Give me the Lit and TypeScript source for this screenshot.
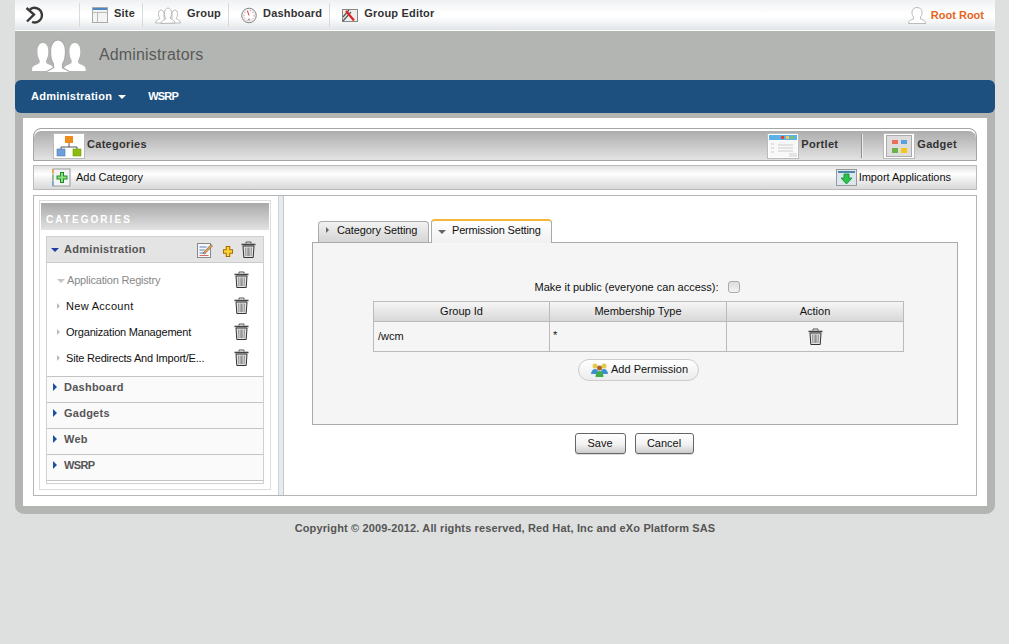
import { LitElement, html, css, svg } from 'lit';
import { customElement } from 'lit/decorators.js';

const trash = () => html`<svg class="trash" width="15" height="17" viewBox="0 0 15 17">
  <path d="M5 2.500V1h5v1.500" fill="none" stroke="#555"/>
  <path d="M.5 3.500h14" stroke="#444" stroke-width="1.600"/>
  <path d="M2 5h11l-.8 11.500H2.800z" fill="#e2e2e2" stroke="#333"/>
  <path d="M4.500 6.500l.3 8.500M6.200 6.500l.1 8.500M7.500 6.500v8.500M8.800 6.500l-.1 8.500M10.500 6.500l-.3 8.500" stroke="#777" stroke-width=".7"/>
</svg>`;

// one white figure of the "group" mark, 22 wide and 26 high before scaling
const person = (x: number, y: number, s: number, stroke: string) => svg`<g transform="translate(${x} ${y}) scale(${s})">
  <path d="M1 26v-2c0-3 5-4 7-5.500V16C6.500 14 6 11 6 7.500 6 3 8 0 11 0s5 3 5 7.500c0 3.500-.5 6.500-2 8.500v2.500c2 1.500 7 2.500 7 5.500v2z" fill="#fff" stroke=${stroke} stroke-width=".8"/>
</g>`;

const tri = (dir: 'tri-right' | 'tri-down' | 'tri-small', color: string) =>
  html`<span class="tri ${dir}" style="--c:${color}"></span>`;

@customElement('app-root')
export class AppRoot extends LitElement {
  static styles = css`
    :host { display: block; height: 644px; background: #dee0df; font: 11px "Liberation Sans", Arial, sans-serif; color: #111; overflow: hidden; }
    * { box-sizing: border-box; }
    svg { display: block; flex: none; }
    .tri { display: inline-block; width: 0; height: 0; flex: none; }
    .tri-right { border-left: 4px solid var(--c); border-top: 4px solid transparent; border-bottom: 4px solid transparent; }
    .tri-small { border-left: 3px solid var(--c); border-top: 3px solid transparent; border-bottom: 3px solid transparent; }
    .tri-down { border-top: 4px solid var(--c); border-left: 4px solid transparent; border-right: 4px solid transparent; }

    .shell { width: 980px; margin-left: 15px; }
    .top { height: 31px; display: flex; align-items: center; background: linear-gradient(#eef1f3, #fff 45%, #fff 55%, #e2e6e9); border-bottom: 1px solid #fff; }
    .logo { width: 64px; padding-left: 10px; }
    .top-item { display: flex; align-items: center; gap: 6px; height: 24px; padding: 0 7px 0 12px; border-left: 1px solid #d8dada; font-weight: bold; color: #333; letter-spacing: .2px; }
    .top-item span { margin-bottom: 4px; }
    .user { margin-left: auto; display: flex; align-items: center; gap: 5px; padding-right: 11px; color: #e6641c; font-weight: bold; }

    .body { background: #b3b5b3; border-radius: 0 0 9px 9px; padding-bottom: 8px; }
    .head { height: 49px; display: flex; align-items: center; padding-left: 15px; }
    .head h1 { margin: 0 0 2px 11px; font-size: 16px; font-weight: normal; color: #585a58; letter-spacing: .15px; }
    .nav { height: 33px; background: #1d4f7f; border-radius: 6px; display: flex; align-items: center; padding: 0 0 2px 16px; color: #fff; font-weight: bold; letter-spacing: .25px; }
    .nav .item { display: flex; align-items: center; gap: 6px; margin-right: 22px; }
    .nav .item .tri { margin-top: 2px; }
    .nav .caps { letter-spacing: -.8px; }

    .panel { margin: 5px 8px 0; background: #fff; padding: 10px; height: 388px; }
    .tabbar { height: 33px; border: 1px solid #a5a5a5; border-radius: 8px 8px 0 0; background: linear-gradient(#a9a9a9, #e3e3e3); box-shadow: inset 0 2px 0 #fff; display: flex; align-items: center; font-weight: bold; color: #333; letter-spacing: .3px; padding: 2px 19px 0 19px; }
    .tabbar .lbl { margin-bottom: 4px; }
    .tile { width: 32px; height: 26px; background: #fff; border: 1px solid #bbb; display: flex; align-items: center; justify-content: center; margin-right: 2px; }
    .spacer { flex: 1; }
    .tabbar .sep { width: 2px; height: 24px; background: #8f8f8f; border-right: 1px solid #eee; margin: 0 20px 0 23px; }

    .tools { margin-top: 4px; height: 25px; border: 1px solid #bbb; background: linear-gradient(#e2e2e2, #fff 35%, #eee 60%, #d9d9d9); display: flex; align-items: center; padding: 0 25px 0 18px; }
    .tools .act { display: flex; align-items: center; gap: 2px; }
    .tools .act span { margin-bottom: 2px; letter-spacing: -.03px; }
    .tools .add { gap: 5px; }

    .main { margin-top: 5px; height: 301px; border: 1px solid #b5b5b5; display: flex; }
    .left { width: 244px; padding: 4px 0 0 5px; }
    .divider { width: 6px; background: #e6ebef; border-left: 1px solid #cdd2d6; border-right: 1px solid #c5c8ca; }

    .cats { width: 232px; height: 290px; border: 1px solid #ddd; padding: 2px 1px 0; }
    .cats-h { height: 27px; padding: 6px 0 0 5px; background: linear-gradient(#a9a9a9, #e2e2e2); color: #fff; font-weight: bold; font-size: 10px; letter-spacing: 2.050px; display: flex; align-items: center; }
    .tree { margin: 6px 5px 0; height: 248px; border: 1px solid #d0d0d0; padding-bottom: 2px; }
    .root { height: 26px; background: #e4e4e4; border-bottom: 1px solid #ccc; display: flex; align-items: center; padding: 0 7px 0 4px; color: #555; font-weight: bold; letter-spacing: .3px; }
    .root .tri { margin-right: 5px; }
    .root .name { margin-bottom: 2px; }
    .root .icons { margin-left: auto; display: flex; align-items: center; }
    .root .pencil { margin-right: 9px; }
    .root .plus { margin: 3px 7px 0 0; }
    .subs { padding-top: 4px; height: 113px; }
    .sub { height: 26px; display: flex; align-items: center; padding: 0 14px 0 10px; }
    .sub .tri { margin-right: 6px; }
    .sub .t { flex: 1; white-space: nowrap; letter-spacing: -.2px; }
    .sub .t.wide { letter-spacing: .3px; }
    .sub svg { margin-bottom: 2px; }
    .sub.muted { color: #888; }
    .sub.muted .tri { margin: 1px 2px 0 0; }
    .cat { height: 26px; border-top: 1px solid #c4c4c4; background: #fafafa; display: flex; align-items: center; padding: 0 0 6px 6px; color: #555; font-weight: bold; letter-spacing: .25px; }
    .cat .tri { margin-right: 7px; }
    .cat.last { height: 27px; border-bottom: 1px solid #c4c4c4; }
    .cat .caps { letter-spacing: -.6px; }

    .content { flex: 1; padding: 23px 18px 0 28px; }
    .tabs { display: flex; align-items: flex-end; height: 23px; padding-left: 6px; gap: 2px; position: relative; z-index: 1; }
    .tab { height: 21px; width: 111px; border: 1px solid #aaa; border-bottom: 0; border-radius: 4px 4px 0 0; background: linear-gradient(#f2f2f2, #d4d4d4); display: flex; align-items: center; padding: 0 0 5px 7px; gap: 8px; letter-spacing: -.1px; }
    .tab.on { height: 24px; margin-bottom: -1px; width: 121px; border-top: 2px solid #f4b73c; background: linear-gradient(#fff, #f0f0f0); padding: 0 0 5px 6px; gap: 6px; letter-spacing: -.17px; }
    .tab.on .tri { margin-top: 5px; }
    .box { height: 183px; border: 1px solid #aaa; background: #f5f5f5; padding-top: 36px; display: flex; flex-direction: column; align-items: center; }
    .pub { display: flex; align-items: center; gap: 9px; margin-left: 4px; height: 16px; }
    .check { width: 12px; height: 12px; border: 1px solid #aaa; border-radius: 3px; background: linear-gradient(#ddd, #f2f2f2); }
    .grid { margin: 6px 0 0 7px; width: 531px; border: 1px solid #bbb; display: grid; grid-template-columns: 175px 177px 177px; }
    .grid > div { display: flex; align-items: center; justify-content: center; }
    .grid .th { height: 20px; background: linear-gradient(#f6f6f6, #d8d8d8); border-bottom: 1px solid #bbb; border-left: 1px solid #bbb; padding-bottom: 2px; }
    .grid .td { height: 29px; border-left: 1px solid #bbb; }
    .grid .first { border-left: 0; }
    .grid .txt { justify-content: flex-start; padding: 0 0 2px 4px; }
    .grid .star { align-items: flex-start; padding: 7px 0 0 3px; }
    .pill { margin: 7px 0 0 7px; width: 121px; height: 22px; border: 1px solid #ccc; border-radius: 11px; background: linear-gradient(#fff, #ececec); display: flex; align-items: center; gap: 3px; padding: 0 0 2px 12px; }
    .btns { display: flex; justify-content: center; gap: 9px; margin-top: 8px; padding-right: 2px; }
    .btn { height: 21px; border: 1px solid #666; border-radius: 3px; background: linear-gradient(#fff, #f2f2f2 55%, #ccc); display: flex; align-items: center; justify-content: center; padding-bottom: 1px; box-shadow: 0 1px 0 #ddd; }
    .btn.s { width: 51px; }
    .btn.c { width: 59px; }

    .foot { text-align: center; margin-top: 8px; font-weight: bold; color: #555; letter-spacing: .14px; }
  `;

  render() {
    return html`
      <div class="shell">
        <div class="top">
          <div class="logo">
            <svg width="21" height="20" viewBox="0 0 21 20" fill="none" stroke="#3a3a3a" stroke-width="2.400">
              <path d="M5 4.500A7.300 7.300 0 1 1 7 17M1.500 3l7.500 6.500-7 7"/>
            </svg>
          </div>
          <div class="top-item">
            <svg width="16" height="16" viewBox="0 0 16 16"><rect x=".5" y=".5" width="15" height="15" fill="#f4f4f4" stroke="#aaa"/><rect x="1" y="1" width="14" height="2" fill="#4d87c7"/><path d="M1 5.500h14M5.500 5.500V15" stroke="#bbb"/></svg>
            <span>Site</span>
          </div>
          <div class="top-item">
            <svg width="26" height="17" viewBox="0 0 26 17" fill="#fff" stroke="#aaa" stroke-width=".8">
              <path d="M.5 16c0-3 3-3 4.500-4.500-1-1-1.500-3-1.500-5 0-2 1-3.500 2.500-3.500s3 1.500 3 3.500v5l4 4.500z"/>
              <path d="M25.500 16c0-3-3-3-4.500-4.500 1-1 1.500-3 1.500-5 0-2-1-3.500-2.500-3.500s-3 1.500-3 3.500v5l-4 4.500z"/>
              <path d="M6 16.500c0-3 4-3.500 5-5-1-1-1.500-3-1.500-5.500C9.500 3 11 1 13 1s3.500 2 3.500 4.500c0 2.500-.5 4.500-1.500 5.500 1 1.500 5 2 5 5z"/>
            </svg>
            <span>Group</span>
          </div>
          <div class="top-item">
            <svg width="16" height="17" viewBox="0 0 16 17"><circle cx="8" cy="8.500" r="7.300" fill="#eee" stroke="#888"/><circle cx="8" cy="8.500" r="5" fill="#fff" stroke="#d88" stroke-dasharray="1 2"/><path d="M8 8.500L6.500 4" stroke="#d33" stroke-width="1"/><circle cx="8" cy="12.500" r="1" fill="#999"/></svg>
            <span>Dashboard</span>
          </div>
          <div class="top-item">
            <svg width="16" height="14" viewBox="0 0 16 14"><rect x=".5" y="1.500" width="15" height="12" fill="#eee" stroke="#888"/><path d="M1 9l6-7M1 13l8-9" stroke="#555" stroke-width="1.200"/><path d="M4 3l8 9.500" stroke="#d22" stroke-width="2.200"/></svg>
            <span>Group Editor</span>
          </div>
          <div class="user">
            <svg width="18" height="17" viewBox="0 0 18 17"><path d="M.5 16.500c0-3 2-3.500 5-4.500V10C4 8.500 4 6.500 4 5c0-2.500 2-4.500 5-4.500s5 2 5 4.500c0 1.500 0 3.500-1.500 5v2c3 1 5 1.500 5 4.500z" fill="#fff" stroke="#bbb"/></svg>
            Root Root
          </div>
        </div>
        <div class="body">
          <div class="head">
            <svg width="58" height="33" viewBox="0 0 58 33">
              ${person(1, 4, 1.080, 'none')}
              ${person(33, 4, 1.080, 'none')}
              ${person(11.500, 1, 1.500, '#a8aaa8')}
            </svg>
            <h1>Administrators</h1>
          </div>
          <div class="nav">
            <div class="item">Administration ${tri('tri-down', '#fff')}</div>
            <div class="item caps">WSRP</div>
          </div>
          <div class="panel">
            <div class="tabbar">
              <div class="tile">
                <svg width="26" height="24" viewBox="0 0 26 24"><rect x="9" y="2" width="8" height="7" fill="#f08c1e"/><path d="M13 9v4M5 16v-3h16v3" fill="none" stroke="#555"/><rect x="1" y="15" width="8" height="7" fill="#6f9fd8" stroke="#4a78b0" stroke-width=".6"/><rect x="17" y="15" width="8" height="7" fill="#8dbb10" stroke="#6d9a08" stroke-width=".6"/></svg>
              </div>
              <span class="lbl">Categories</span>
              <div class="spacer"></div>
              <div class="tile">
                <svg width="28" height="22" viewBox="0 0 28 22"><rect width="28" height="5" fill="#5bb1ea"/><rect x="12" y="1" width="3" height="3" fill="#e8412c"/><rect x="17" y="1" width="3" height="3" fill="#f2c94c"/><rect x="22" y="1" width="3" height="3" fill="#7ac36a"/><rect y="5" width="28" height="17" fill="#f8f8f8"/><path d="M9 10h15M9 13h15M9 16h15M2 9h3M2 13h3M2 17h3" stroke="#ccc"/><rect x="20" y="18" width="8" height="4" fill="#e4e4e4"/></svg>
              </div>
              <span class="lbl">Portlet</span>
              <div class="sep"></div>
              <div class="tile">
                <svg width="26" height="22" viewBox="0 0 26 22"><rect x=".5" y=".5" width="25" height="21" fill="#ddd" stroke="#aaa"/><rect x="6" y="5" width="6" height="4" fill="#e8705a"/><rect x="15" y="5" width="6" height="4" fill="#5b9fe0"/><rect x="6" y="13" width="6" height="5" fill="#6cb24a"/><rect x="15" y="13" width="6" height="5" fill="#f5c518"/></svg>
              </div>
              <span class="lbl">Gadget</span>
            </div>
            <div class="tools">
              <div class="act add">
                <svg width="19" height="19" viewBox="0 0 19 19"><rect x="1" y="1" width="17" height="17" fill="#f4f4f4" stroke="#999"/><path d="M.5 1v4" stroke="#f0a030" stroke-width="2"/><path d="M.5 7v5" stroke="#7cc07c" stroke-width="2"/><path d="M.5 13v5" stroke="#6f9fd8" stroke-width="2"/><path d="M10 4v11M4.500 9.500h11" stroke="#1d8a2a" stroke-width="4"/><path d="M10 5v9M5.500 9.500h9" stroke="#8fe07f" stroke-width="2"/></svg>
                <span>Add Category</span>
              </div>
              <div class="spacer"></div>
              <div class="act">
                <svg width="21" height="17" viewBox="0 0 21 17"><rect x=".5" y=".5" width="20" height="16" fill="#dbe7ee" stroke="#999"/><rect x="2" y="2" width="17" height="2" fill="#4d87a7"/><path d="M8 5h5v4h3l-5.500 6L5 9h3z" fill="#2ac24a" stroke="#128a2a" stroke-width=".8"/></svg>
                <span>Import Applications</span>
              </div>
            </div>
            <div class="main">
              <div class="left">
                <div class="cats">
                  <div class="cats-h">CATEGORIES</div>
                  <div class="tree">
                    <div class="root">
                      ${tri('tri-down', '#1d3f9f')}
                      <span class="name">Administration</span>
                      <div class="icons">
                        <svg class="pencil" width="16" height="16" viewBox="0 0 16 16"><rect x=".5" y="1.500" width="13" height="14" fill="#f4f8fb" stroke="#888"/><path d="M2.500 5h7M2.500 8h5M2.500 11h6" stroke="#5b7fb8"/><path d="M2.500 13.500h9" stroke="#d66"/><path d="M6 11L14 2.500l1.500 1.500L7.500 12z" fill="#f2a03c" stroke="#555" stroke-width=".6"/></svg>
                        <svg class="plus" width="12" height="13" viewBox="0 0 12 13"><path d="M6 1v11M1 6.500h10" stroke="#a86a00" stroke-width="4.500"/><path d="M6 2v9M2 6.500h8" stroke="#fbd435" stroke-width="2.500"/></svg>
                        ${trash()}
                      </div>
                    </div>
                    <div class="subs">
                      <div class="sub muted">${tri('tri-down', '#c4c4c4')}<span class="t">Application Registry</span>${trash()}</div>
                      <div class="sub">${tri('tri-small', '#bbb')}<span class="t wide">New Account</span>${trash()}</div>
                      <div class="sub">${tri('tri-small', '#bbb')}<span class="t">Organization Management</span>${trash()}</div>
                      <div class="sub">${tri('tri-small', '#bbb')}<span class="t">Site Redirects And Import/E...</span>${trash()}</div>
                    </div>
                    <div class="cat">${tri('tri-right', '#1d4f9f')}Dashboard</div>
                    <div class="cat">${tri('tri-right', '#1d4f9f')}Gadgets</div>
                    <div class="cat">${tri('tri-right', '#1d4f9f')}Web</div>
                    <div class="cat last">${tri('tri-right', '#1d4f9f')}<span class="caps">WSRP</span></div>
                  </div>
                </div>
              </div>
              <div class="divider"></div>
              <div class="content">
                <div class="tabs">
                  <div class="tab">${tri('tri-small', '#666')}Category Setting</div>
                  <div class="tab on">${tri('tri-down', '#666')}Permission Setting</div>
                </div>
                <div class="box">
                  <div class="pub">Make it public (everyone can access): <span class="check"></span></div>
                  <div class="grid">
                    <div class="th first">Group Id</div>
                    <div class="th">Membership Type</div>
                    <div class="th">Action</div>
                    <div class="td first txt">/wcm</div>
                    <div class="td txt star">*</div>
                    <div class="td">${trash()}</div>
                  </div>
                  <div class="pill">
                    <svg width="17" height="15" viewBox="0 0 17 15"><circle cx="4" cy="4" r="2.500" fill="#e8c84a"/><circle cx="13" cy="4" r="2.500" fill="#e8c84a"/><path d="M0 12c0-3 2-5 4-5s3 1 3 3v2z" fill="#3f8fd0"/><path d="M17 12c0-3-2-5-4-5s-3 1-3 3v2z" fill="#3f8fd0"/><circle cx="8.500" cy="6" r="2.500" fill="#a8642a"/><path d="M4.500 15c0-4 2-6 4-6s4 2 4 6z" fill="#3fae4a"/></svg>
                    Add Permission
                  </div>
                </div>
                <div class="btns">
                  <div class="btn s">Save</div>
                  <div class="btn c">Cancel</div>
                </div>
              </div>
            </div>
          </div>
        </div>
        <div class="foot">Copyright © 2009-2012. All rights reserved, Red Hat, Inc and eXo Platform SAS</div>
      </div>
    `;
  }
}
